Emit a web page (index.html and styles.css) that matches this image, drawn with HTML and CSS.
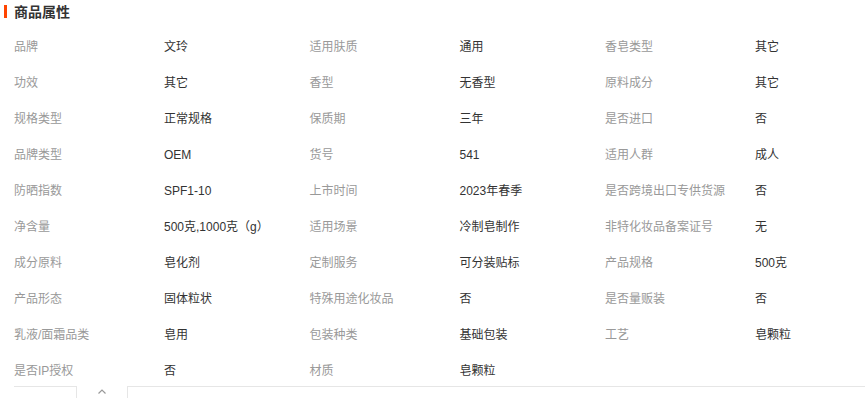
FILE: index.html
```html
<!DOCTYPE html>
<html lang="zh-CN">
<head>
<meta charset="utf-8">
<title>商品属性</title>
<link rel="stylesheet" href="styles.css">
</head>
<body>
<div class="panel">
  <div class="head"><span class="bar"></span><h2 class="title">商品属性</h2></div>
  <div class="attrs">
    <span class="k">品牌</span><span class="v">文玲</span>
    <span class="k">适用肤质</span><span class="v">通用</span>
    <span class="k">香皂类型</span><span class="v">其它</span>

    <span class="k">功效</span><span class="v">其它</span>
    <span class="k">香型</span><span class="v">无香型</span>
    <span class="k">原料成分</span><span class="v">其它</span>

    <span class="k">规格类型</span><span class="v">正常规格</span>
    <span class="k">保质期</span><span class="v">三年</span>
    <span class="k">是否进口</span><span class="v">否</span>

    <span class="k">品牌类型</span><span class="v">OEM</span>
    <span class="k">货号</span><span class="v">541</span>
    <span class="k">适用人群</span><span class="v">成人</span>

    <span class="k">防晒指数</span><span class="v">SPF1-10</span>
    <span class="k">上市时间</span><span class="v">2023年春季</span>
    <span class="k">是否跨境出口专供货源</span><span class="v">否</span>

    <span class="k">净含量</span><span class="v">500克,1000克（g）</span>
    <span class="k">适用场景</span><span class="v">冷制皂制作</span>
    <span class="k">非特化妆品备案证号</span><span class="v">无</span>

    <span class="k">成分原料</span><span class="v">皂化剂</span>
    <span class="k">定制服务</span><span class="v">可分装贴标</span>
    <span class="k">产品规格</span><span class="v">500克</span>

    <span class="k">产品形态</span><span class="v">固体粒状</span>
    <span class="k">特殊用途化妆品</span><span class="v">否</span>
    <span class="k">是否量贩装</span><span class="v">否</span>

    <span class="k">乳液/面霜品类</span><span class="v">皂用</span>
    <span class="k">包装种类</span><span class="v">基础包装</span>
    <span class="k">工艺</span><span class="v">皂颗粒</span>

    <span class="k">是否IP授权</span><span class="v">否</span>
    <span class="k">材质</span><span class="v">皂颗粒</span>
  </div>
  <div class="foot">
    <div class="tab tab-left"></div>
    <div class="toggle">
      <svg width="8" height="5" viewBox="0 0 8 5" aria-hidden="true"><polyline points="0.5,4.5 4,1 7.5,4.5" fill="none" stroke="#999" stroke-width="1.2"/></svg>
    </div>
    <div class="tab tab-right"></div>
  </div>
</div>
</body>
</html>
```
FILE: styles.css
```css
html, body {
  margin: 0;
  padding: 0;
  background: #fff;
}
body {
  font-family: "Liberation Sans", "Noto Sans CJK SC", sans-serif;
  font-size: 12px;
  color: #333;
  overflow: hidden;
}
.panel {
  width: 865px;
}
.head {
  display: flex;
  align-items: center;
  height: 22px;
  padding-left: 4px;
}
.bar {
  width: 3px;
  height: 13px;
  background: #ff4400;
  margin-right: 7px;
}
.title {
  margin: 0;
  font-size: 14px;
  font-weight: bold;
  color: #333;
  line-height: 16px;
  font-family: "Noto Sans CJK SC", sans-serif;
}
.attrs {
  margin-top: 7px;
  padding-left: 14px;
  display: grid;
  grid-template-columns: 150px 145.5px 150px 145.5px 150px 110px;
  grid-auto-rows: 36px;
  align-items: center;
}
.k {
  color: #999;
  line-height: 16px;
  white-space: nowrap;
}
.v {
  color: #333;
  line-height: 16px;
  white-space: nowrap;
}
.foot {
  display: flex;
  margin-top: -3px;
  height: 20px;
  padding-left: 14px;
}
.tab {
  border-top: 1px solid #e6e6e6;
  height: 20px;
}
.tab-left {
  width: 62px;
  border-right: 1px solid #e6e6e6;
}
.toggle {
  width: 50px;
  display: flex;
  justify-content: center;
  padding-top: 3px;
  height: 10px;
}
.tab-right {
  flex: 1;
  border-left: 1px solid #e6e6e6;
}
```
